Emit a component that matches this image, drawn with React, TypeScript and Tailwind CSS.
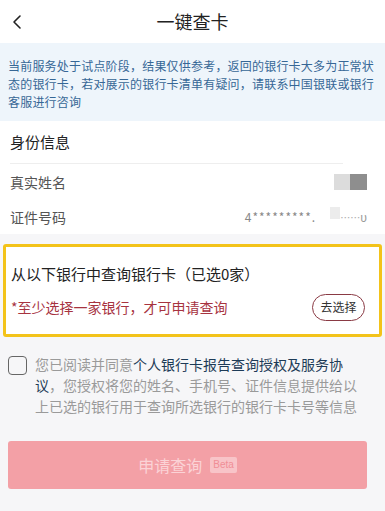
import { ChevronLeft } from 'lucide-react';

export default function App() {
  return (
    <div
      className="w-[385px] h-[511px] overflow-hidden bg-[#f6f6f8] flex flex-col"
      style={{ fontFamily: '"Noto Sans CJK SC", "Noto Sans", sans-serif' }}
    >
      {/* header */}
      <header className="h-[43px] bg-white flex items-center relative shrink-0">
        <ChevronLeft className="ml-[5px] w-[24px] h-[24px] text-[#222]" strokeWidth={1.6} />
        <h1 className="absolute left-0 right-0 text-center text-[18px] text-[#222] pointer-events-none">一键查卡</h1>
      </header>

      {/* notice */}
      <div className="bg-[#eef5fb] px-[8px] pt-[14px] pb-[10px] text-[12px] leading-[18px] text-[#366796] tracking-[0.2px]">
        当前服务处于试点阶段，结果仅供参考，返回的银行卡大多为正常状态的银行卡，若对展示的银行卡清单有疑问，请联系中国银联或银行客服进行咨询
      </div>

      {/* identity */}
      <section className="bg-white pl-[10px] pr-[18px]">
        <div className="h-[43px] flex items-center text-[15px] text-[#222] border-b border-[#eeeeee] mr-[24px]">身份信息</div>
        <div className="h-[36px] flex items-center justify-between text-[14px] text-[#555]">
          <span>真实姓名</span>
          <div className="flex">
            <span className="w-[16px] h-[16px] bg-[#dcdcdc]" />
            <span className="w-[17px] h-[16px] bg-[#8e8e8e]" />
          </div>
        </div>
        <div className="h-[34px] flex items-center justify-between text-[14px] text-[#555]">
          <span>证件号码</span>
          <div className="flex items-center text-[12px] text-[#888]">
            <span className="tracking-[1px]">4*********.</span>
            <span className="ml-[14px] w-[10px] h-[12px] bg-[#ececec] -mt-[8px]" />
            <span className="text-[10px] text-[#aaa]">……</span>
            <span className="text-[#999]">υ</span>
          </div>
        </div>
      </section>

      {/* bank box */}
      <section className="mt-[10px] mx-[3px] border-[3px] border-[#f3c31a] rounded-[3px] bg-white h-[93px] px-[5px] flex flex-col">
        <div className="mt-[16px] text-[15px] text-[#222]">从以下银行中查询银行卡（已选0家）</div>
        <div className="mt-[8px] flex items-center justify-between pr-[9px]">
          <span className="text-[14px] text-[#a7333f]">*至少选择一家银行，才可申请查询</span>
          <button className="w-[53px] h-[27px] rounded-full border border-[#8a3a44] text-[12px] text-[#333] flex items-center justify-center">去选择</button>
        </div>
      </section>

      {/* agreement */}
      <div className="flex pl-[8px] pr-[20px] pt-[18px]">
        <span className="w-[19px] h-[19px] mt-[1px] rounded-[4px] border-[1.5px] border-[#666] shrink-0" />
        <p className="ml-[8px] text-[14px] leading-[21px] text-[#9a9a9a] -mt-[1px]">
          您已阅读并同意<span className="text-[#1d3b57]">个人银行卡报告查询授权及服务协</span>
          <br />
          <span className="text-[#1d3b57]">议</span>，您授权将您的姓名、手机号、证件信息提供给以上已选的银行用于查询所选银行的银行卡卡号等信息
        </p>
      </div>

      {/* submit */}
      <div className="mt-[24px] ml-[8px] mr-[18px] h-[48px] rounded-[3px] bg-[#f3a0a6] flex items-center justify-center gap-[8px]">
        <span className="text-[16px] text-[#fbd3d6]">申请查询</span>
        <span className="px-[3px] h-[16px] leading-[16px] text-[10px] bg-[#f8c4c8] text-[#f08e96] rounded-[2px]" style={{ fontFamily: '"Liberation Sans", sans-serif' }}>Beta</span>
      </div>
    </div>
  );
}
